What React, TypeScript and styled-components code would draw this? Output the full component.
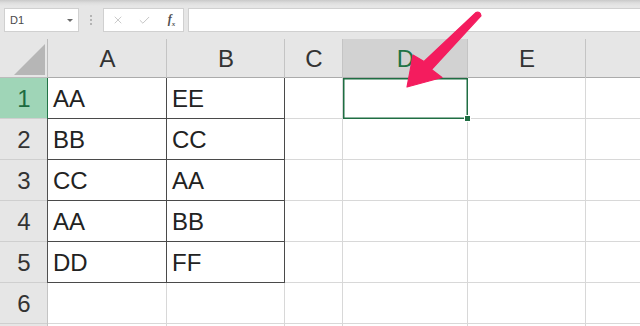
import React from "react";
import styled, { createGlobalStyle } from "styled-components";
import { X, Check } from "lucide-react";

const GlobalStyle = createGlobalStyle`
  html, body {
    margin: 0;
    padding: 0;
    background: #ffffff;
    overflow: hidden;
  }
  body {
    font-family: "Liberation Sans", Arial, sans-serif;
  }
`;

// the last column runs off the right edge, so its letter is not in view
const columns = ["A", "B", "C", "D", "E", ""];

const data: string[][] = [
  ["AA", "EE"],
  ["BB", "CC"],
  ["CC", "AA"],
  ["AA", "BB"],
  ["DD", "FF"],
  [],
];

const selected = { row: 0, col: 3 };

const App: React.FC = () => {
  return (
    <Page>
      <GlobalStyle />
      <Toolbar>
        <NameBox>
          <span>D1</span>
          <DropCaret />
        </NameBox>
        <Grip>
          <i />
          <i />
          <i />
        </Grip>
        <FxBox>
          <X size={12} strokeWidth={1.6} color="#bcbcbc" />
          <Check size={13} strokeWidth={1.6} color="#bcbcbc" />
          <FxLabel>
            f<sub>x</sub>
          </FxLabel>
        </FxBox>
        <FormulaInput />
      </Toolbar>

      <Sheet>
        <Corner>
          <svg width="48" height="39" viewBox="0 0 48 39">
            <polygon points="14,36 45,5 45,36" fill="#b6b6b6" />
          </svg>
        </Corner>
        {columns.map((c, i) => (
          <ColHead key={i} $active={i === selected.col}>
            {c}
          </ColHead>
        ))}

        {data.map((row, r) => (
          <React.Fragment key={r}>
            <RowHead $active={r === selected.row} $boxed={r < 5}>
              {r + 1}
            </RowHead>
            {columns.map((_, ci) => {
              const boxed = r < 5 && ci < 2;
              const isSel = r === selected.row && ci === selected.col;
              return (
                <Cell key={ci} $boxed={boxed} $selected={isSel}>
                  {row[ci] ?? ""}
                  {isSel && <FillHandle />}
                </Cell>
              );
            })}
          </React.Fragment>
        ))}
        <RowHead />
        {columns.map((_, ci) => (
          <Cell key={ci} />
        ))}
      </Sheet>

      <Arrow width="640" height="326" viewBox="0 0 640 326">
        <path
          d="M407 87 L413 55 L424 61.5 L475.8 12.6 Q480 11 481 15.8 L431.5 69.5 L442 77.5 Z"
          fill="#f41c5e"
          stroke="#f41c5e"
          strokeWidth="1.2"
          strokeLinejoin="round"
        />
      </Arrow>
    </Page>
  );
};

export default App;

const Page = styled.div`
  position: relative;
  width: 640px;
  height: 326px;
  overflow: hidden;
  background: #ffffff;
`;

const Toolbar = styled.div`
  display: flex;
  align-items: center;
  height: 39px;
  box-sizing: border-box;
  padding: 1px 0 0 4px;
  background: linear-gradient(#c9c9c9 0px, #dedede 3px, #e6e6e6 6px);
`;

const NameBox = styled.div`
  display: flex;
  align-items: center;
  justify-content: space-between;
  width: 75px;
  height: 24px;
  box-sizing: border-box;
  padding: 0 5px 0 5px;
  background: #ffffff;
  border: 1px solid #d0d0d0;
  font-size: 11px;
  color: #4a4a4a;
`;

const DropCaret = styled.span`
  width: 0;
  height: 0;
  border-left: 3px solid transparent;
  border-right: 3px solid transparent;
  border-top: 3px solid #6a6a6a;
`;

const Grip = styled.div`
  display: flex;
  flex-direction: column;
  align-items: center;
  gap: 2px;
  width: 24px;

  i {
    display: block;
    width: 2px;
    height: 2px;
    background: #b4b4b4;
  }
`;

const FxBox = styled.div`
  display: grid;
  grid-template-columns: 27px 27px 27px;
  place-items: center;
  width: 81px;
  height: 24px;
  box-sizing: border-box;
  background: #ffffff;
  border: 1px solid #d0d0d0;
`;

const FxLabel = styled.span`
  font-family: "Liberation Serif", "Times New Roman", serif;
  font-style: italic;
  font-weight: bold;
  font-size: 12px;
  color: #505050;

  sub {
    font-size: 7px;
  }
`;

const FormulaInput = styled.div`
  flex: 1;
  height: 24px;
  margin-left: 4px;
  box-sizing: border-box;
  background: #ffffff;
  border: 1px solid #d0d0d0;
  border-right: none;
`;

const Sheet = styled.div`
  display: grid;
  width: 720px;
  grid-template-columns: 48px 119px 118px 58px 125px 118px 134px;
  grid-template-rows: 39px;
  grid-auto-rows: 41px;
  font-size: 24px;
  color: #222222;
`;

const Corner = styled.div`
  background: #e6e6e6;
  box-shadow: inset -1px -1px 0 #bcbcbc;

  svg {
    display: block;
  }
`;

const ColHead = styled.div<{ $active?: boolean }>`
  background: ${(p) => (p.$active ? "#d2d2d2" : "#e6e6e6")};
  color: ${(p) => (p.$active ? "#217346" : "#333333")};
  box-shadow: inset -1px 0 0 #c4c4c4, inset 0 -1px 0 #ababab;
  line-height: 39px;
  text-align: center;
`;

const RowHead = styled.div<{ $active?: boolean; $boxed?: boolean }>`
  background: ${(p) => (p.$active ? "#9fd5b7" : "#e6e6e6")};
  color: ${(p) => (p.$active ? "#1d6b40" : "#333333")};
  box-shadow: inset -1px 0 0
      ${(p) => (p.$active ? "#217346" : p.$boxed ? "#505050" : "#c4c4c4")},
    inset 0 -1px 0 #cfcfcf;
  line-height: 41px;
  text-align: center;
`;

const Cell = styled.div<{ $boxed?: boolean; $selected?: boolean }>`
  position: relative;
  padding-left: 5px;
  line-height: 41px;
  white-space: nowrap;
  background: #ffffff;
  box-shadow: ${(p) =>
    p.$selected
      ? "inset 0 0 0 1.5px #1f6e43"
      : p.$boxed
        ? "inset -1px -1px 0 #4a4a4a"
        : "inset -1px -1px 0 #d8d8d8"};
`;

const FillHandle = styled.span`
  position: absolute;
  right: -3px;
  bottom: -3px;
  width: 5px;
  height: 5px;
  background: #1f6e43;
  border: 1px solid #ffffff;
  z-index: 1;
`;

const Arrow = styled.svg`
  position: absolute;
  left: 0;
  top: 0;
  pointer-events: none;
`;
